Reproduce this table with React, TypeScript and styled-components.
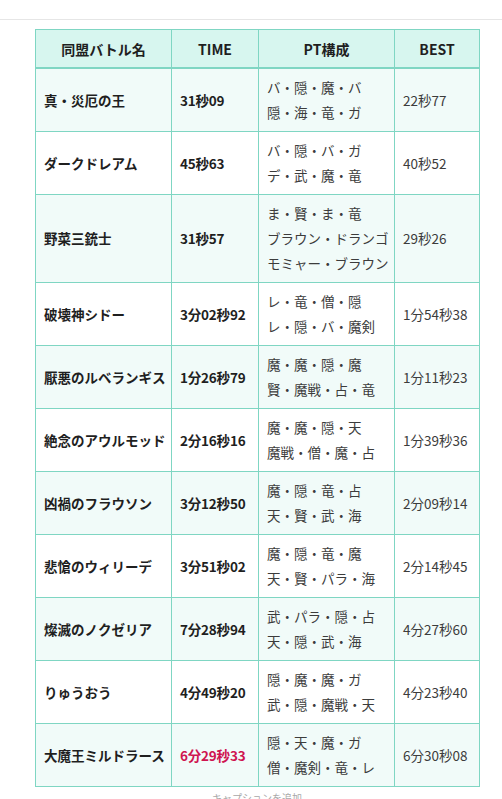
import React from "react";
import styled, { createGlobalStyle } from "styled-components";

const Global = createGlobalStyle`
  html, body { margin: 0; padding: 0; background: #ffffff; }
  body { font-family: "Noto Sans CJK JP", "Noto Sans", sans-serif; color: #222; }
`;

const TopBar = styled.div`
  height: 19px;
  border-bottom: 1px solid #e6e6e6;
`;

const Figure = styled.figure`
  margin: 9px 0 0 35px;
  width: 444px;
`;

const Table = styled.table`
  border-collapse: collapse;
  table-layout: fixed;
  width: 444px;
`;

const HeadCell = styled.th`
  background: #d7f6ef;
  border: 1px solid #7fd6c3;
  border-bottom: 2px solid #7fd6c3;
  height: 37px;
  padding: 0 6px;
  font-size: 14px;
  font-weight: bold;
  color: #1f1f1f;
  text-align: center;
  vertical-align: middle;
`;

const Row = styled.tr<{ $shade: boolean }>`
  background: ${(p) => (p.$shade ? "#f1fbf9" : "#ffffff")};
`;

const Cell = styled.td<{ $kind: "name" | "time" | "pt" | "best"; $red?: boolean }>`
  border: 1px solid #7fd6c3;
  padding: 6px 8px;
  line-height: 25px;
  font-size: 13.5px;
  vertical-align: middle;
  text-align: left;
  white-space: nowrap;
  overflow: visible;
  font-weight: ${(p) => (p.$kind === "name" || p.$kind === "time" ? "bold" : "normal")};
  color: ${(p) =>
    p.$red ? "#cf1450" : p.$kind === "pt" || p.$kind === "best" ? "#3c3c3c" : "#1f1f1f"};
  letter-spacing: ${(p) => (p.$kind === "time" ? "-0.2px" : "0")};
`;

const PtLine = styled.div``;

const Caption = styled.figcaption`
  text-align: center;
  font-size: 10px;
  color: #a8a8a8;
  margin-top: 4px;
  line-height: 14px;
`;

type Rec = { name: string; time: string; pt: string[]; best: string; red?: boolean };

const data: Rec[] = [
  { name: "真・災厄の王", time: "31秒09", pt: ["バ・隠・魔・バ", "隠・海・竜・ガ"], best: "22秒77" },
  { name: "ダークドレアム", time: "45秒63", pt: ["バ・隠・バ・ガ", "デ・武・魔・竜"], best: "40秒52" },
  {
    name: "野菜三銃士",
    time: "31秒57",
    pt: ["ま・賢・ま・竜", "ブラウン・ドランゴ", "モミャー・ブラウン"],
    best: "29秒26",
  },
  { name: "破壊神シドー", time: "3分02秒92", pt: ["レ・竜・僧・隠", "レ・隠・バ・魔剣"], best: "1分54秒38" },
  { name: "厭悪のルベランギス", time: "1分26秒79", pt: ["魔・魔・隠・魔", "賢・魔戦・占・竜"], best: "1分11秒23" },
  { name: "絶念のアウルモッド", time: "2分16秒16", pt: ["魔・魔・隠・天", "魔戦・僧・魔・占"], best: "1分39秒36" },
  { name: "凶禍のフラウソン", time: "3分12秒50", pt: ["魔・隠・竜・占", "天・賢・武・海"], best: "2分09秒14" },
  { name: "悲愴のウィリーデ", time: "3分51秒02", pt: ["魔・隠・竜・魔", "天・賢・パラ・海"], best: "2分14秒45" },
  { name: "燦滅のノクゼリア", time: "7分28秒94", pt: ["武・パラ・隠・占", "天・隠・武・海"], best: "4分27秒60" },
  { name: "りゅうおう", time: "4分49秒20", pt: ["隠・魔・魔・ガ", "武・隠・魔戦・天"], best: "4分23秒40" },
  {
    name: "大魔王ミルドラース",
    time: "6分29秒33",
    pt: ["隠・天・魔・ガ", "僧・魔剣・竜・レ"],
    best: "6分30秒08",
    red: true,
  },
];

export default function App() {
  return (
    <>
      <Global />
      <TopBar />
      <Figure>
        <Table>
          <colgroup>
            <col style={{ width: 136 }} />
            <col style={{ width: 87 }} />
            <col style={{ width: 136 }} />
            <col style={{ width: 85 }} />
          </colgroup>
          <thead>
            <tr>
              <HeadCell>同盟バトル名</HeadCell>
              <HeadCell>TIME</HeadCell>
              <HeadCell>PT構成</HeadCell>
              <HeadCell>BEST</HeadCell>
            </tr>
          </thead>
          <tbody>
            {data.map((r, i) => (
              <Row key={r.name} $shade={i % 2 === 0}>
                <Cell $kind="name">{r.name}</Cell>
                <Cell $kind="time" $red={r.red}>
                  {r.time}
                </Cell>
                <Cell $kind="pt">
                  {r.pt.map((l) => (
                    <PtLine key={l}>{l}</PtLine>
                  ))}
                </Cell>
                <Cell $kind="best">{r.best}</Cell>
              </Row>
            ))}
          </tbody>
        </Table>
        <Caption>キャプションを追加</Caption>
      </Figure>
    </>
  );
}
